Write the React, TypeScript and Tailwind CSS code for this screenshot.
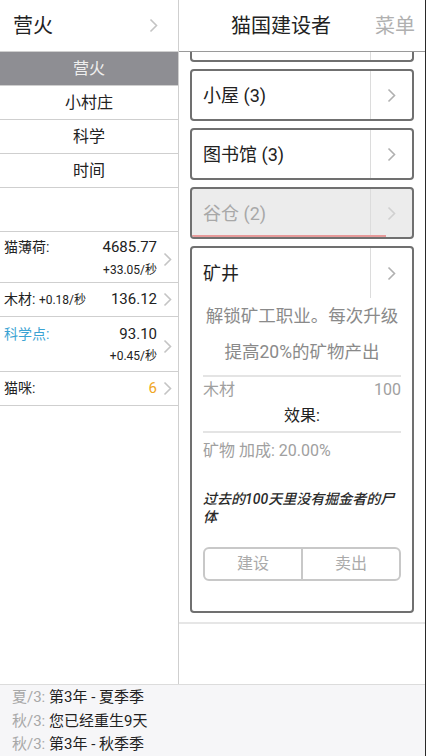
import React from "react";

const Chevron = ({ className = "" }: { className?: string }) => (
  <svg width="9" height="15" viewBox="0 0 9 15" className={className}>
    <polyline points="1.5,1.5 7.5,7.5 1.5,13.5" fill="none" stroke="currentColor" strokeWidth="1.6" />
  </svg>
);

const tabs = ["营火", "小村庄", "科学", "时间"];

const BuildRow = ({ label, disabled, progress }: any) => (
  <div
    className={`relative flex h-[52px] rounded-[4px] border-2 border-[#707070] overflow-hidden ${
      disabled ? "bg-[#ececec]" : "bg-white"
    }`}
  >
    <div className={`flex-1 flex items-center pl-[11px] text-[18px] ${disabled ? "text-[#a8a8a8]" : "text-[#222]"}`}>
      {label}
    </div>
    <div className={`w-[42px] border-l border-[#dcdcdc] flex items-center justify-center ${disabled ? "text-[#d0d0d0]" : "text-[#b0b0b0]"}`}>
      <Chevron />
    </div>
    {progress && <div className="absolute left-0 bottom-0 h-[2px] w-[88%] bg-[#e79a9a]" />}
  </div>
);

export default function App() {
  return (
    <div
      className="w-[426px] h-[756px] flex flex-col bg-white border-r border-[#2a2a2a] overflow-hidden"
      style={{ fontFamily: 'Roboto, "Noto Sans CJK SC", sans-serif' }}
    >
      <div className="flex flex-1 min-h-0">
        {/* left column */}
        <div className="w-[179px] border-r border-[#cfcfcf] flex flex-col">
          <div className="h-[52px] border-b border-[#cfcfcf] flex items-center justify-between pl-[13px] pr-[20px]">
            <span className="text-[20px] text-[#222]">营火</span>
            <Chevron className="text-[#c4c4c4]" />
          </div>
          {tabs.map((t, i) => (
            <div
              key={t}
              className={`h-[34px] border-b border-[#cfcfcf] flex items-center justify-center text-[16px] ${
                i === 0 ? "bg-[#8e8e93] text-[#eeeeee]" : "text-[#222]"
              }`}
            >
              {t}
            </div>
          ))}
          <div className="h-[43px]" />
          <div className="border-t border-[#cfcfcf]">
            <div className="h-[51px] border-b border-[#cfcfcf] flex items-center pl-[4px] pr-[6px]">
              <div className="flex-1 flex flex-col">
                <div className="flex justify-between items-center h-[26px]">
                  <span className="text-[14px] text-[#222]">猫薄荷:</span>
                  <span className="text-[15px] text-[#222]">4685.77</span>
                </div>
                <div className="text-right text-[12px] text-[#222] leading-[20px]">+33.05/秒</div>
              </div>
              <Chevron className="text-[#c4c4c4] ml-[6px] mt-[4px]" />
            </div>
            <div className="h-[34px] border-b border-[#cfcfcf] flex items-center pl-[4px] pr-[6px]">
              <div className="flex-1 flex justify-between items-center">
                <span className="text-[14px] text-[#222]">
                  木材: <span className="text-[12px]">+0.18/秒</span>
                </span>
                <span className="text-[15px] text-[#222]">136.12</span>
              </div>
              <Chevron className="text-[#c4c4c4] ml-[6px]" />
            </div>
            <div className="h-[55px] border-b border-[#cfcfcf] flex items-center pl-[4px] pr-[6px]">
              <div className="flex-1 flex flex-col">
                <div className="flex justify-between items-center h-[24px]">
                  <span className="text-[14px] text-[#3ba3d3]">科学点:</span>
                  <span className="text-[15px] text-[#222]">93.10</span>
                </div>
                <div className="text-right text-[12px] text-[#222] leading-[20px]">+0.45/秒</div>
              </div>
              <Chevron className="text-[#c4c4c4] ml-[6px] mt-[4px]" />
            </div>
            <div className="h-[34px] border-b border-[#cfcfcf] flex items-center pl-[4px] pr-[6px]">
              <div className="flex-1 flex justify-between items-center">
                <span className="text-[14px] text-[#222]">猫咪:</span>
                <span className="text-[15px] text-[#f0a623]">6</span>
              </div>
              <Chevron className="text-[#c4c4c4] ml-[6px]" />
            </div>
          </div>
        </div>

        {/* right column */}
        <div className="flex-1 flex flex-col">
          <div className="h-[52px] border-b border-[#9a9a9a] flex items-center justify-between pl-[52px] pr-[10px]">
            <span className="text-[20px] text-[#222]">猫国建设者</span>
            <span className="text-[20px] text-[#b0b0b0]">菜单</span>
          </div>
          <div className="flex flex-col gap-[7px] px-[11px] pb-[9px] border-b-2 border-[#e6e6e6]">
            <div className="h-[10px] flex border-2 border-t-0 border-[#707070] rounded-b-[4px]">
              <div className="flex-1" />
              <div className="w-[42px] border-l border-[#dcdcdc]" />
            </div>
            <BuildRow label="小屋 (3)" />
            <BuildRow label="图书馆 (3)" />
            <BuildRow label="谷仓 (2)" disabled progress />
            <div className="h-[367px] rounded-[4px] border-2 border-[#707070] flex flex-col">
              <div className="h-[50px] flex">
                <div className="flex-1 flex items-center pl-[11px] text-[18px] text-[#222]">矿井</div>
                <div className="w-[42px] border-l border-[#dcdcdc] flex items-center justify-center text-[#b0b0b0]">
                  <Chevron />
                </div>
              </div>
              <div className="px-[11px] flex flex-col">
                <div className="text-center text-[17.5px] leading-[36px] text-[#8a8a8a]">
                  解锁矿工职业。每次升级
                  <br />
                  提高20%的矿物产出
                </div>
                <div className="mt-[5px] border-t-2 border-[#e4e4e4] flex justify-between text-[16px] leading-[26px] text-[#a0a0a0]">
                  <span>木材</span>
                  <span>100</span>
                </div>
                <div className="text-center text-[16px] leading-[26px] text-[#222]">效果:</div>
                <div className="mt-[2px] border-t-2 border-[#e4e4e4] text-[16px] leading-[36px] text-[#a0a0a0]">
                  矿物 加成: 20.00%
                </div>
                <div className="mt-[21px] text-[14px] leading-[18px] italic font-medium text-[#2a2a2a]">
                  过去的100天里没有掘金者的尸体
                </div>
                <div className="mt-[21px] h-[34px] flex rounded-[6px] border-2 border-[#c8c8c8] text-[16px] text-[#aaaaaa]">
                  <div className="flex-1 flex items-center justify-center border-r-2 border-[#c8c8c8]">建设</div>
                  <div className="flex-1 flex items-center justify-center">卖出</div>
                </div>
              </div>
            </div>
          </div>
        </div>
      </div>

      {/* log */}
      <div className="h-[72px] bg-[#f6f6f8] border-t border-[#dcdcdc] pl-[12px] pt-[1px] text-[15px] leading-[23.5px]">
        <div>
          <span className="text-[#a8a8a8]">夏/3: </span>
          <span className="text-[#222]">第3年 - 夏季季</span>
        </div>
        <div>
          <span className="text-[#a8a8a8]">秋/3: </span>
          <span className="text-[#222]">您已经重生9天</span>
        </div>
        <div>
          <span className="text-[#a8a8a8]">秋/3: </span>
          <span className="text-[#222]">第3年 - 秋季季</span>
        </div>
      </div>
    </div>
  );
}
